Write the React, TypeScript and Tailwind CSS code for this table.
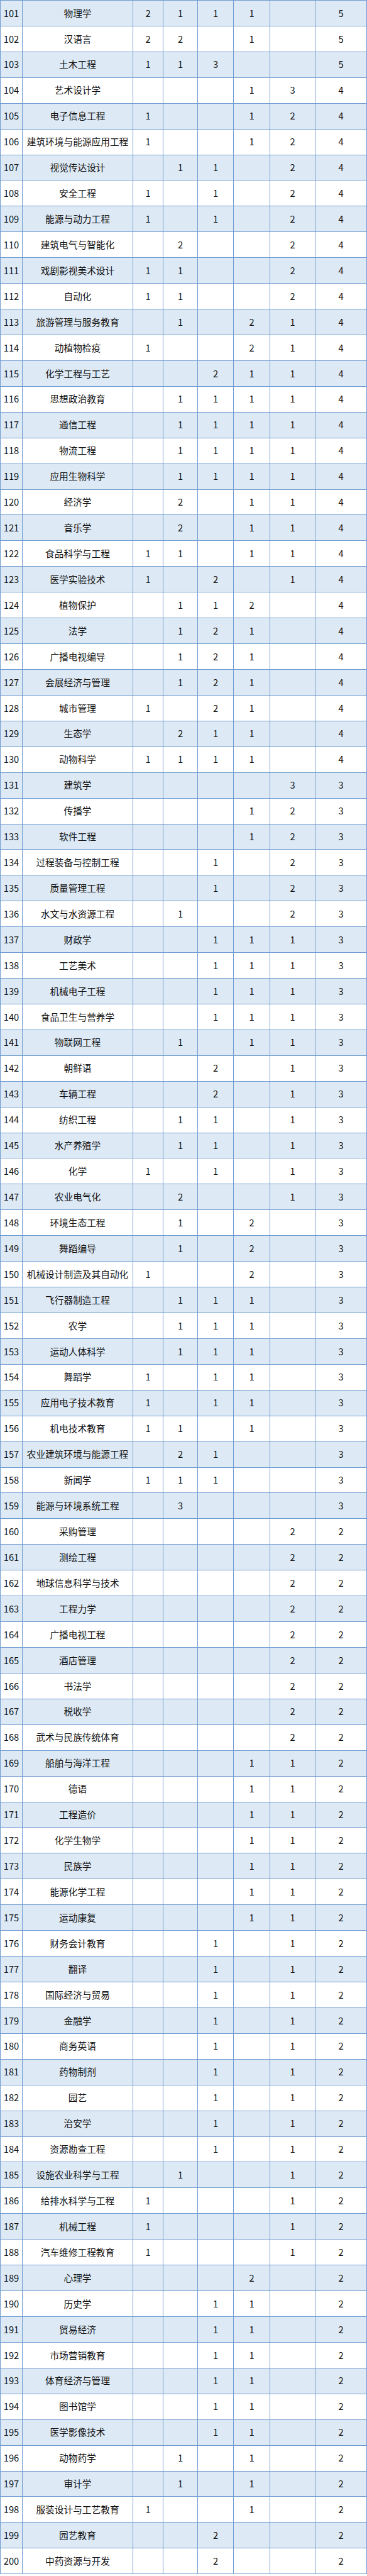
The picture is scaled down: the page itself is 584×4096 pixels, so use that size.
import React from "react";

type Row = [number, string, string, string, string, string, string, string];

const raw: string = `101|物理学|2|1|1|1||5
102|汉语言|2|2||1||5
103|土木工程|1|1|3|||5
104|艺术设计学||||1|3|4
105|电子信息工程|1|||1|2|4
106|建筑环境与能源应用工程|1|||1|2|4
107|视觉传达设计||1|1||2|4
108|安全工程|1||1||2|4
109|能源与动力工程|1||1||2|4
110|建筑电气与智能化||2|||2|4
111|戏剧影视美术设计|1|1|||2|4
112|自动化|1|1|||2|4
113|旅游管理与服务教育||1||2|1|4
114|动植物检疫|1|||2|1|4
115|化学工程与工艺|||2|1|1|4
116|思想政治教育||1|1|1|1|4
117|通信工程||1|1|1|1|4
118|物流工程||1|1|1|1|4
119|应用生物科学||1|1|1|1|4
120|经济学||2||1|1|4
121|音乐学||2||1|1|4
122|食品科学与工程|1|1||1|1|4
123|医学实验技术|1||2||1|4
124|植物保护||1|1|2||4
125|法学||1|2|1||4
126|广播电视编导||1|2|1||4
127|会展经济与管理||1|2|1||4
128|城市管理|1||2|1||4
129|生态学||2|1|1||4
130|动物科学|1|1|1|1||4
131|建筑学|||||3|3
132|传播学||||1|2|3
133|软件工程||||1|2|3
134|过程装备与控制工程|||1||2|3
135|质量管理工程|||1||2|3
136|水文与水资源工程||1|||2|3
137|财政学|||1|1|1|3
138|工艺美术|||1|1|1|3
139|机械电子工程|||1|1|1|3
140|食品卫生与营养学|||1|1|1|3
141|物联网工程||1||1|1|3
142|朝鲜语|||2||1|3
143|车辆工程|||2||1|3
144|纺织工程||1|1||1|3
145|水产养殖学||1|1||1|3
146|化学|1||1||1|3
147|农业电气化||2|||1|3
148|环境生态工程||1||2||3
149|舞蹈编导||1||2||3
150|机械设计制造及其自动化|1|||2||3
151|飞行器制造工程||1|1|1||3
152|农学||1|1|1||3
153|运动人体科学||1|1|1||3
154|舞蹈学|1||1|1||3
155|应用电子技术教育|1||1|1||3
156|机电技术教育|1|1||1||3
157|农业建筑环境与能源工程||2|1|||3
158|新闻学|1|1|1|||3
159|能源与环境系统工程||3||||3
160|采购管理|||||2|2
161|测绘工程|||||2|2
162|地球信息科学与技术|||||2|2
163|工程力学|||||2|2
164|广播电视工程|||||2|2
165|酒店管理|||||2|2
166|书法学|||||2|2
167|税收学|||||2|2
168|武术与民族传统体育|||||2|2
169|船舶与海洋工程||||1|1|2
170|德语||||1|1|2
171|工程造价||||1|1|2
172|化学生物学||||1|1|2
173|民族学||||1|1|2
174|能源化学工程||||1|1|2
175|运动康复||||1|1|2
176|财务会计教育|||1||1|2
177|翻译|||1||1|2
178|国际经济与贸易|||1||1|2
179|金融学|||1||1|2
180|商务英语|||1||1|2
181|药物制剂|||1||1|2
182|园艺|||1||1|2
183|治安学|||1||1|2
184|资源勘查工程|||1||1|2
185|设施农业科学与工程||1|||1|2
186|给排水科学与工程|1||||1|2
187|机械工程|1||||1|2
188|汽车维修工程教育|1||||1|2
189|心理学||||2||2
190|历史学|||1|1||2
191|贸易经济|||1|1||2
192|市场营销教育|||1|1||2
193|体育经济与管理|||1|1||2
194|图书馆学|||1|1||2
195|医学影像技术|||1|1||2
196|动物药学||1||1||2
197|审计学||1||1||2
198|服装设计与工艺教育|1|||1||2
199|园艺教育|||2|||2
200|中药资源与开发|||2|||2`;

const rows: Row[] = raw.split("\n").map((line) => {
  const p = line.split("|");
  return [Number(p[0]), p[1], p[2], p[3], p[4], p[5], p[6], p[7]] as Row;
});

function Cell({ children }: { children?: React.ReactNode }) {
  return (
    <div className="flex items-center justify-center border-r border-[#6f9bd1] whitespace-nowrap overflow-hidden">
      {children}
    </div>
  );
}

export default function App() {
  return (
    <div
      className="w-[584px] border-l border-t border-[#6f9bd1] text-[14.7px] leading-none text-[#111]"
      style={{ fontFamily: '"Noto Sans CJK SC", "Noto Sans", sans-serif' }}
    >
      {rows.map((r, i) => (
        <div
          key={r[0]}
          className={
            i % 2 === 0
              ? "grid grid-cols-[35px_176px_48px_55px_57px_58px_72px_82px] h-[40.93px] border-b border-[#6f9bd1] bg-[#dde9f5]"
              : "grid grid-cols-[35px_176px_48px_55px_57px_58px_72px_82px] h-[40.93px] border-b border-[#6f9bd1] bg-white"
          }
        >
          <Cell>{r[0]}</Cell>
          <Cell>{r[1]}</Cell>
          <Cell>{r[2]}</Cell>
          <Cell>{r[3]}</Cell>
          <Cell>{r[4]}</Cell>
          <Cell>{r[5]}</Cell>
          <Cell>{r[6]}</Cell>
          <Cell>{r[7]}</Cell>
        </div>
      ))}
    </div>
  );
}
